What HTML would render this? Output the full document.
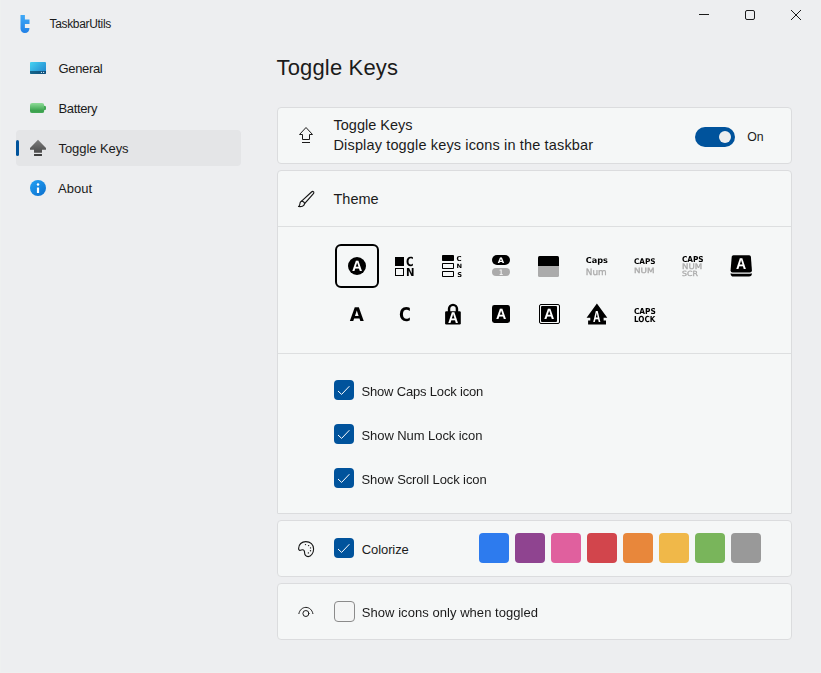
<!DOCTYPE html>
<html lang="en">
<head>
<meta charset="utf-8">
<title>TaskbarUtils</title>
<style>
*{box-sizing:border-box;margin:0;padding:0}
html,body{width:821px;height:673px;overflow:hidden}
body{background:#edeef0;font-family:"Liberation Sans",sans-serif;color:#1b1b1b;position:relative}
.abs{position:absolute}
.t{position:absolute;white-space:nowrap;line-height:1;color:#1b1b1b}
.nav{font-size:13px}
.card{position:absolute;left:277px;width:515px;background:#f5f7f7;border:1px solid #dbdcde;border-radius:4px}
.hl{position:absolute;left:278px;width:513px;height:1px;background:#dddfe0}
.cb{position:absolute;left:334px;width:20px;height:20px;border-radius:4px;background:#00539c}
.cb svg{position:absolute;left:0;top:0}
.sw{position:absolute;top:533px;width:30px;height:30px;border-radius:4px}
svg{display:block;overflow:visible}
.ic{position:absolute}
.b{font-weight:bold}
.gl{will-change:transform;pointer-events:none}
</style>
</head>
<body>

<!-- edge strips -->
<div class="abs" style="left:0;top:0;width:1px;height:673px;background:#eef0f0"></div>
<div class="abs" style="left:820px;top:0;width:1px;height:673px;background:#eef0f0"></div>
<div class="abs" style="left:0;top:672px;width:821px;height:1px;background:#eef0f0"></div>

<!-- title bar -->
<svg class="ic" style="left:20px;top:15px" width="10" height="18" viewBox="0 0 10 18">
 <defs><linearGradient id="lg" x1="0" y1="0" x2="0" y2="1"><stop offset="0" stop-color="#3fa9f7"/><stop offset="1" stop-color="#2180e6"/></linearGradient></defs>
 <path d="M0.5 0H4.9V4.5H9.5V8.9H4.9V13H9.5C9.5 16 7.6 18 4.9 18C2.3 18 0.5 16 0.5 13.4Z" fill="url(#lg)"/>
</svg>
<div class="t" id="t1" style="left:49.5px;top:18px;font-size:12px;letter-spacing:-0.33px">TaskbarUtils</div>

<svg class="ic" style="left:694px;top:5px" width="112" height="20" viewBox="0 0 112 20" fill="none" stroke="#1b1b1b" stroke-width="1">
 <path d="M5 9.5H15"/>
 <rect x="51.5" y="5.5" width="9" height="9" rx="1.5"/>
 <path d="M97 5L107 15M107 5L97 15"/>
</svg>

<!-- sidebar -->
<div class="abs" style="left:16px;top:130px;width:225px;height:36px;background:#e4e5e7;border-radius:4px"></div>
<div class="abs" style="left:16px;top:140px;width:3px;height:16px;background:#00539c;border-radius:1.5px"></div>

<!-- General icon -->
<svg class="ic" style="left:30px;top:62px" width="16" height="12" viewBox="0 0 16 12">
 <defs><linearGradient id="gg" x1="0" y1="0" x2="1" y2="0.8"><stop offset="0" stop-color="#46d3f2"/><stop offset="1" stop-color="#2288cf"/></linearGradient>
 <linearGradient id="gs" x1="0" y1="0" x2="1" y2="0"><stop offset="0" stop-color="#15668c"/><stop offset="1" stop-color="#0e4b78"/></linearGradient></defs>
 <rect x="0" y="0" width="16" height="12" rx="1" fill="url(#gg)"/>
 <path d="M0 9H16V11A1 1 0 0 1 15 12H1A1 1 0 0 1 0 11Z" fill="url(#gs)"/>
 <rect x="10.9" y="9.9" width="1.1" height="1.1" fill="#c4e3f2"/><rect x="13" y="9.9" width="1.2" height="1.1" fill="#c4e3f2"/>
</svg>
<div class="t nav" id="t2" style="left:58.5px;top:62px;letter-spacing:-0.35px">General</div>

<!-- Battery icon -->
<svg class="ic" style="left:30px;top:103px" width="16" height="10" viewBox="0 0 16 10">
 <defs><linearGradient id="bg" x1="0" y1="0" x2="0" y2="1"><stop offset="0" stop-color="#8fdc98"/><stop offset="0.5" stop-color="#57b767"/><stop offset="0.78" stop-color="#3a9f4c"/><stop offset="1" stop-color="#46ab57"/></linearGradient></defs>
 <rect x="0" y="0" width="14.2" height="10.1" rx="2.2" fill="url(#bg)"/>
 <path d="M14 3.1H15A1 1 0 0 1 16 4.1V6A1 1 0 0 1 15 7H14Z" fill="#43a755"/>
</svg>
<div class="t nav" id="t3" style="left:58.5px;top:102px;letter-spacing:-0.35px">Battery</div>

<!-- Toggle keys icon -->
<svg class="ic" style="left:30px;top:139px" width="16" height="18" viewBox="0 0 16 18">
 <defs><linearGradient id="tg" x1="0" y1="0" x2="0" y2="1"><stop offset="0" stop-color="#7e7e7e"/><stop offset="1" stop-color="#4b4b4b"/></linearGradient></defs>
 <path d="M8 0.7L16 9.1V10.4Q16 10.8 15.6 10.8H12V13.2Q12 13.7 11.5 13.7H4.5Q4 13.7 4 13.2V10.8H0.4Q0 10.8 0 10.4V9.1Z" fill="url(#tg)"/>
 <rect x="4" y="15" width="8" height="1.9" rx="0.3" fill="#3e3e3e"/>
</svg>
<div class="t nav" id="t4" style="left:58.5px;top:142px;letter-spacing:-0.07px">Toggle Keys</div>

<!-- About icon -->
<svg class="ic" style="left:30px;top:179.8px" width="16" height="16" viewBox="0 0 16 16">
 <defs><linearGradient id="ag" x1="0.1" y1="0" x2="0.9" y2="1"><stop offset="0" stop-color="#22a0f3"/><stop offset="1" stop-color="#0c70ce"/></linearGradient></defs>
 <circle cx="8" cy="8" r="8" fill="url(#ag)"/>
 <circle cx="8" cy="4.4" r="1.25" fill="#fff"/>
 <rect x="6.9" y="7.5" width="2.2" height="5.6" rx="0.3" fill="#fff"/>
</svg>
<div class="t nav" id="t5" style="left:58px;top:182px;letter-spacing:0.05px">About</div>

<!-- page title -->
<div class="t" id="t6" style="left:276.5px;top:57px;font-size:22px;letter-spacing:0.16px">Toggle Keys</div>

<!-- card 1 -->
<div class="card" style="top:107px;height:57px"></div>
<svg class="ic" style="left:299px;top:127px" width="14" height="16" viewBox="0 0 14 16" fill="none" stroke="#1b1b1b" stroke-width="1" stroke-linejoin="round">
 <path d="M7 0.5L13.5 7.5H10.5V12.5H3.5V7.5H0.5Z"/>
 <path d="M3 15.5H11"/>
</svg>
<div class="t" id="t7" style="left:333.5px;top:117.6px;font-size:14.5px">Toggle Keys</div>
<div class="t" id="t8" style="left:333.5px;top:137.6px;font-size:14.5px;letter-spacing:0.145px">Display toggle keys icons in the taskbar</div>
<div class="abs" style="left:695.2px;top:126.7px;width:40px;height:20px;border-radius:10px;background:#00539c"></div>
<div class="abs" style="left:719.4px;top:130.8px;width:12px;height:12px;border-radius:6px;background:#efefef"></div>
<div class="t" id="t9" style="left:747.3px;top:131px;font-size:12.3px">On</div>

<!-- card 2 (Theme) -->
<div class="card" style="top:170px;height:344px;border-radius:4px 4px 1px 1px"></div>
<div class="hl" style="top:226px"></div>
<div class="hl" style="top:353px"></div>
<svg class="ic" style="left:298px;top:191px" width="16" height="16" viewBox="0 0 16 16" fill="none" stroke="#161616" stroke-width="1.15" stroke-linejoin="round" stroke-linecap="round">
 <path d="M3.3 10.3L13.5 1C14.6 0 16.1 0.4 15.8 1.8C15.7 2.3 15.4 2.7 15 3.1L6.6 12.6"/>
 <path d="M3.3 10.3C1.9 10.9 1.8 12.6 1.7 13.8C1.6 14.8 0.9 15.3 0.5 15.5C3.2 16 6.3 15.2 6.6 12.6C6.5 11.2 4.7 10 3.3 10.3Z"/>
</svg>
<div class="t" id="t10" style="left:333.5px;top:192px;font-size:14.5px">Theme</div>

<!--ICONS-START-->
<!-- theme icons row 1 -->
<div class="abs" style="left:335px;top:244px;width:44.00px;height:44.00px;border:2px solid #000;border-radius:6px"></div>
<div class="abs" style="left:347.9px;top:256.9px;width:18.30px;height:18.30px;border-radius:50%;background:#000"></div>
<div class="abs" style="left:394.6px;top:257px;width:9.40px;height:8.60px;background:#000"></div>
<div class="abs" style="left:394.6px;top:267.8px;width:9.40px;height:8.60px;border:1.2px solid #000"></div>
<div class="abs" style="left:442.2px;top:255.2px;width:12.00px;height:5.50px;background:#000;border-radius:.8px"></div>
<div class="abs" style="left:442.2px;top:263.4px;width:12.00px;height:5.40px;border:1.3px solid #000;border-radius:.8px"></div>
<div class="abs" style="left:442.2px;top:271.2px;width:12.00px;height:5.40px;border:1.3px solid #000;border-radius:.8px"></div>
<div class="abs" style="left:492px;top:255.2px;width:18.40px;height:9.50px;border-radius:5px;background:#000"></div>
<div class="abs" style="left:492px;top:267.8px;width:18.40px;height:8.60px;border-radius:4.5px;background:#ababab"></div>
<div class="abs" style="left:538.0px;top:255.55px;width:21.15px;height:21.20px;border-radius:1.5px;background:linear-gradient(#000 0 49.5%,#ababab 49.5% 100%)"></div>
<svg class="ic" style="left:730px;top:255px" width="23" height="22" viewBox="0 0 23 22">
 <path d="M3.4 0.2H19.2Q20.7 0.2 20.9 1.7L21.9 15.2Q22 17.45 19.9 17.45H2.6Q0.5 17.45 0.6 15.2L1.7 1.7Q1.9 0.2 3.4 0.2Z" fill="#000"/>
 <path d="M0.6 18.3Q1 18.7 2.6 18.7H19.9Q21.5 18.7 21.9 18.3Q21.9 21.6 19 21.6H3.5Q0.6 21.6 0.6 18.5Z" fill="#000"/>
</svg>
<!-- theme icons row 2 -->
<svg class="ic" style="left:445px;top:303px" width="16" height="22" viewBox="0 0 16 22">
 <path d="M4.05 10V5.8A3.95 3.95 0 0 1 11.95 5.8V10" fill="none" stroke="#000" stroke-width="2.45"/>
 <rect x="0.1" y="8.3" width="15.7" height="13.1" rx="1.2" fill="#000"/>
</svg>
<div class="abs" style="left:491.9px;top:304.9px;width:18.30px;height:18.10px;border-radius:2.4px;background:#000"></div>
<div class="abs" style="left:538.5px;top:303.5px;width:21.10px;height:20.90px;border-radius:2px;border:1.35px solid #000"></div>
<div class="abs" style="left:541.0px;top:306.0px;width:15.90px;height:15.90px;background:#000;border-radius:1px"></div>
<svg class="ic" style="left:586px;top:303px" width="22" height="22" viewBox="0 0 22 22">
 <path d="M10.9 0.6L21.3 14.7H17.6V17.4H20V21.4H2.1V17.4H4.3V14.7H0.6Z" fill="#000"/>
</svg>
<svg class="ic gl" style="left:0;top:0" width="821" height="673" font-family="Liberation Sans, sans-serif" text-rendering="geometricPrecision">
<text x="351.90" y="271" font-size="14.83" fill="#fff" font-weight="bold" textLength="10.30" lengthAdjust="spacingAndGlyphs">A</text>
<text x="406.05" y="266" font-size="12.62" fill="#000" font-weight="bold" font-family="DejaVu Sans, sans-serif" textLength="7.60" lengthAdjust="spacingAndGlyphs">C</text>
<text x="406.05" y="276" font-size="11.11" fill="#000" font-weight="bold" font-family="DejaVu Sans, sans-serif" textLength="8.50" lengthAdjust="spacingAndGlyphs">N</text>
<text x="456.55" y="261" font-size="6.86" fill="#000" font-weight="bold" font-family="DejaVu Sans, sans-serif" textLength="5.10" lengthAdjust="spacingAndGlyphs">C</text>
<text x="456.55" y="268" font-size="5.76" fill="#000" font-weight="bold" font-family="DejaVu Sans, sans-serif" textLength="5.60" lengthAdjust="spacingAndGlyphs">N</text>
<text x="457.15" y="277" font-size="6.72" fill="#000" font-weight="bold" font-family="DejaVu Sans, sans-serif" textLength="4.80" lengthAdjust="spacingAndGlyphs">S</text>
<text x="497.75" y="263" font-size="7.68" fill="#fff" font-weight="bold" font-family="DejaVu Sans, sans-serif" textLength="6.40" lengthAdjust="spacingAndGlyphs">A</text>
<text x="499.05" y="275" font-size="7.41" fill="#efefef" font-weight="bold" font-family="DejaVu Sans, sans-serif" textLength="4.10" lengthAdjust="spacingAndGlyphs">1</text>
<text x="585.85" y="263" font-size="8.23" fill="#000" font-weight="bold" font-family="DejaVu Sans, sans-serif" textLength="22.10" lengthAdjust="spacingAndGlyphs">Caps</text>
<text x="585.85" y="275" font-size="8.78" fill="#ababab" font-family="DejaVu Sans, sans-serif" stroke="#ababab" stroke-width=".3" textLength="20.90" lengthAdjust="spacingAndGlyphs">Num</text>
<text x="633.95" y="264" font-size="7.82" fill="#000" font-weight="bold" font-family="DejaVu Sans, sans-serif" textLength="21.60" lengthAdjust="spacingAndGlyphs">CAPS</text>
<text x="633.95" y="273" font-size="7.27" fill="#ababab" font-family="DejaVu Sans, sans-serif" stroke="#ababab" stroke-width=".3" textLength="20.60" lengthAdjust="spacingAndGlyphs">NUM</text>
<text x="681.95" y="262" font-size="8.09" fill="#000" font-weight="bold" font-family="DejaVu Sans, sans-serif" textLength="21.70" lengthAdjust="spacingAndGlyphs">CAPS</text>
<text x="681.95" y="269" font-size="7.68" fill="#ababab" font-family="DejaVu Sans, sans-serif" stroke="#ababab" stroke-width=".3" textLength="20.20" lengthAdjust="spacingAndGlyphs">NUM</text>
<text x="681.95" y="276" font-size="7.13" fill="#ababab" font-family="DejaVu Sans, sans-serif" stroke="#ababab" stroke-width=".3" textLength="15.90" lengthAdjust="spacingAndGlyphs">SCR</text>
<text x="736.00" y="269" font-size="15.70" fill="#fff" font-weight="bold" textLength="10.20" lengthAdjust="spacingAndGlyphs">A</text>
<text x="349.65" y="321" font-size="18.79" fill="#000" font-weight="bold" font-family="DejaVu Sans, sans-serif" textLength="14.10" lengthAdjust="spacingAndGlyphs">A</text>
<text x="398.95" y="321" font-size="18.79" fill="#000" font-weight="bold" font-family="DejaVu Sans, sans-serif" textLength="11.90" lengthAdjust="spacingAndGlyphs">C</text>
<text x="447.90" y="323" font-size="15.55" fill="#fff" font-weight="bold" textLength="10.30" lengthAdjust="spacingAndGlyphs">A</text>
<text x="495.90" y="319" font-size="14.83" fill="#fff" font-weight="bold" textLength="10.30" lengthAdjust="spacingAndGlyphs">A</text>
<text x="543.90" y="319" font-size="14.83" fill="#fff" font-weight="bold" textLength="10.30" lengthAdjust="spacingAndGlyphs">A</text>
<text x="593.10" y="322" font-size="15.84" fill="#fff" font-weight="bold" textLength="7.60" lengthAdjust="spacingAndGlyphs">A</text>
<text x="633.95" y="314" font-size="8.23" fill="#000" font-weight="bold" font-family="DejaVu Sans, sans-serif" textLength="21.90" lengthAdjust="spacingAndGlyphs">CAPS</text>
<text x="633.95" y="322" font-size="8.37" fill="#000" font-weight="bold" font-family="DejaVu Sans, sans-serif" textLength="21.37" lengthAdjust="spacingAndGlyphs">LOCK</text>
</svg>
<!--ICONS-END-->

<!-- checkboxes -->
<div class="cb" style="top:380px"><svg width="20" height="20" viewBox="0 0 20 20" fill="none" stroke="#fff" stroke-width="1"><path d="M4 11L7.6 14.4L15.4 6.2"/></svg></div>
<div class="t nav" id="t11" style="left:361.5px;top:385px;letter-spacing:-0.18px">Show Caps Lock icon</div>
<div class="cb" style="top:424px"><svg width="20" height="20" viewBox="0 0 20 20" fill="none" stroke="#fff" stroke-width="1"><path d="M4 11L7.6 14.4L15.4 6.2"/></svg></div>
<div class="t nav" id="t12" style="left:361.5px;top:429px;letter-spacing:-0.07px">Show Num Lock icon</div>
<div class="cb" style="top:468px"><svg width="20" height="20" viewBox="0 0 20 20" fill="none" stroke="#fff" stroke-width="1"><path d="M4 11L7.6 14.4L15.4 6.2"/></svg></div>
<div class="t nav" id="t13" style="left:361.5px;top:473px;letter-spacing:-0.1px">Show Scroll Lock icon</div>

<!-- card 3 colorize -->
<div class="card" style="top:520px;height:57px"></div>
<svg class="ic" style="left:298px;top:541px" width="16" height="16" viewBox="0 0 16 16" fill="none" stroke="#161616" stroke-width="1.1">
 <path d="M0.6 7.4C0.6 3.4 3.8 0.6 7.8 0.6C12.4 0.6 15.6 3.8 15.6 8C15.6 12 13 15.6 10.2 15.6C7.8 15.6 6.6 13.8 6.6 11.8C6.6 10 6 8.8 4.6 8.8C3.6 8.8 3 9.4 2 9.4C1 9.4 0.6 8.4 0.6 7.4Z"/>
 <g fill="#161616" stroke="none"><circle cx="7.5" cy="3.6" r="0.7"/><circle cx="10.6" cy="4.6" r="0.7"/><circle cx="12.5" cy="6.9" r="0.7"/><circle cx="12.5" cy="9.8" r="0.7"/><circle cx="10.4" cy="11.9" r="0.7"/></g>
</svg>
<div class="cb" style="top:538px"><svg width="20" height="20" viewBox="0 0 20 20" fill="none" stroke="#fff" stroke-width="1"><path d="M4 11L7.6 14.4L15.4 6.2"/></svg></div>
<div class="t nav" id="t14" style="left:361.8px;top:543px;letter-spacing:-0.1px">Colorize</div>
<div class="sw" style="left:479px;background:#2d7bee"></div>
<div class="sw" style="left:515px;background:#8f4490"></div>
<div class="sw" style="left:551px;background:#e0609e"></div>
<div class="sw" style="left:587px;background:#d2454c"></div>
<div class="sw" style="left:623px;background:#e8873b"></div>
<div class="sw" style="left:659px;background:#f0b849"></div>
<div class="sw" style="left:695px;background:#79b55b"></div>
<div class="sw" style="left:731px;background:#999999"></div>

<!-- card 4 -->
<div class="card" style="top:583px;height:57px"></div>
<svg class="ic" style="left:298px;top:606px" width="16" height="12" viewBox="0 0 16 12" fill="none" stroke="#1b1b1b" stroke-width="1" stroke-linecap="round">
 <path d="M0.9 7.6C1.6 4 4.4 1.4 7.9 1.4C11.4 1.4 14.2 4 14.9 7.6"/>
 <circle cx="7.9" cy="7.5" r="3"/>
</svg>
<div class="abs" style="left:334.2px;top:601.2px;width:20.6px;height:20.5px;border-radius:4px;border:1px solid #8b8b8b;background:#f4f5f5"></div>
<div class="t nav" id="t15" style="left:361.8px;top:606px;letter-spacing:0.05px">Show icons only when toggled</div>

</body>
</html>
